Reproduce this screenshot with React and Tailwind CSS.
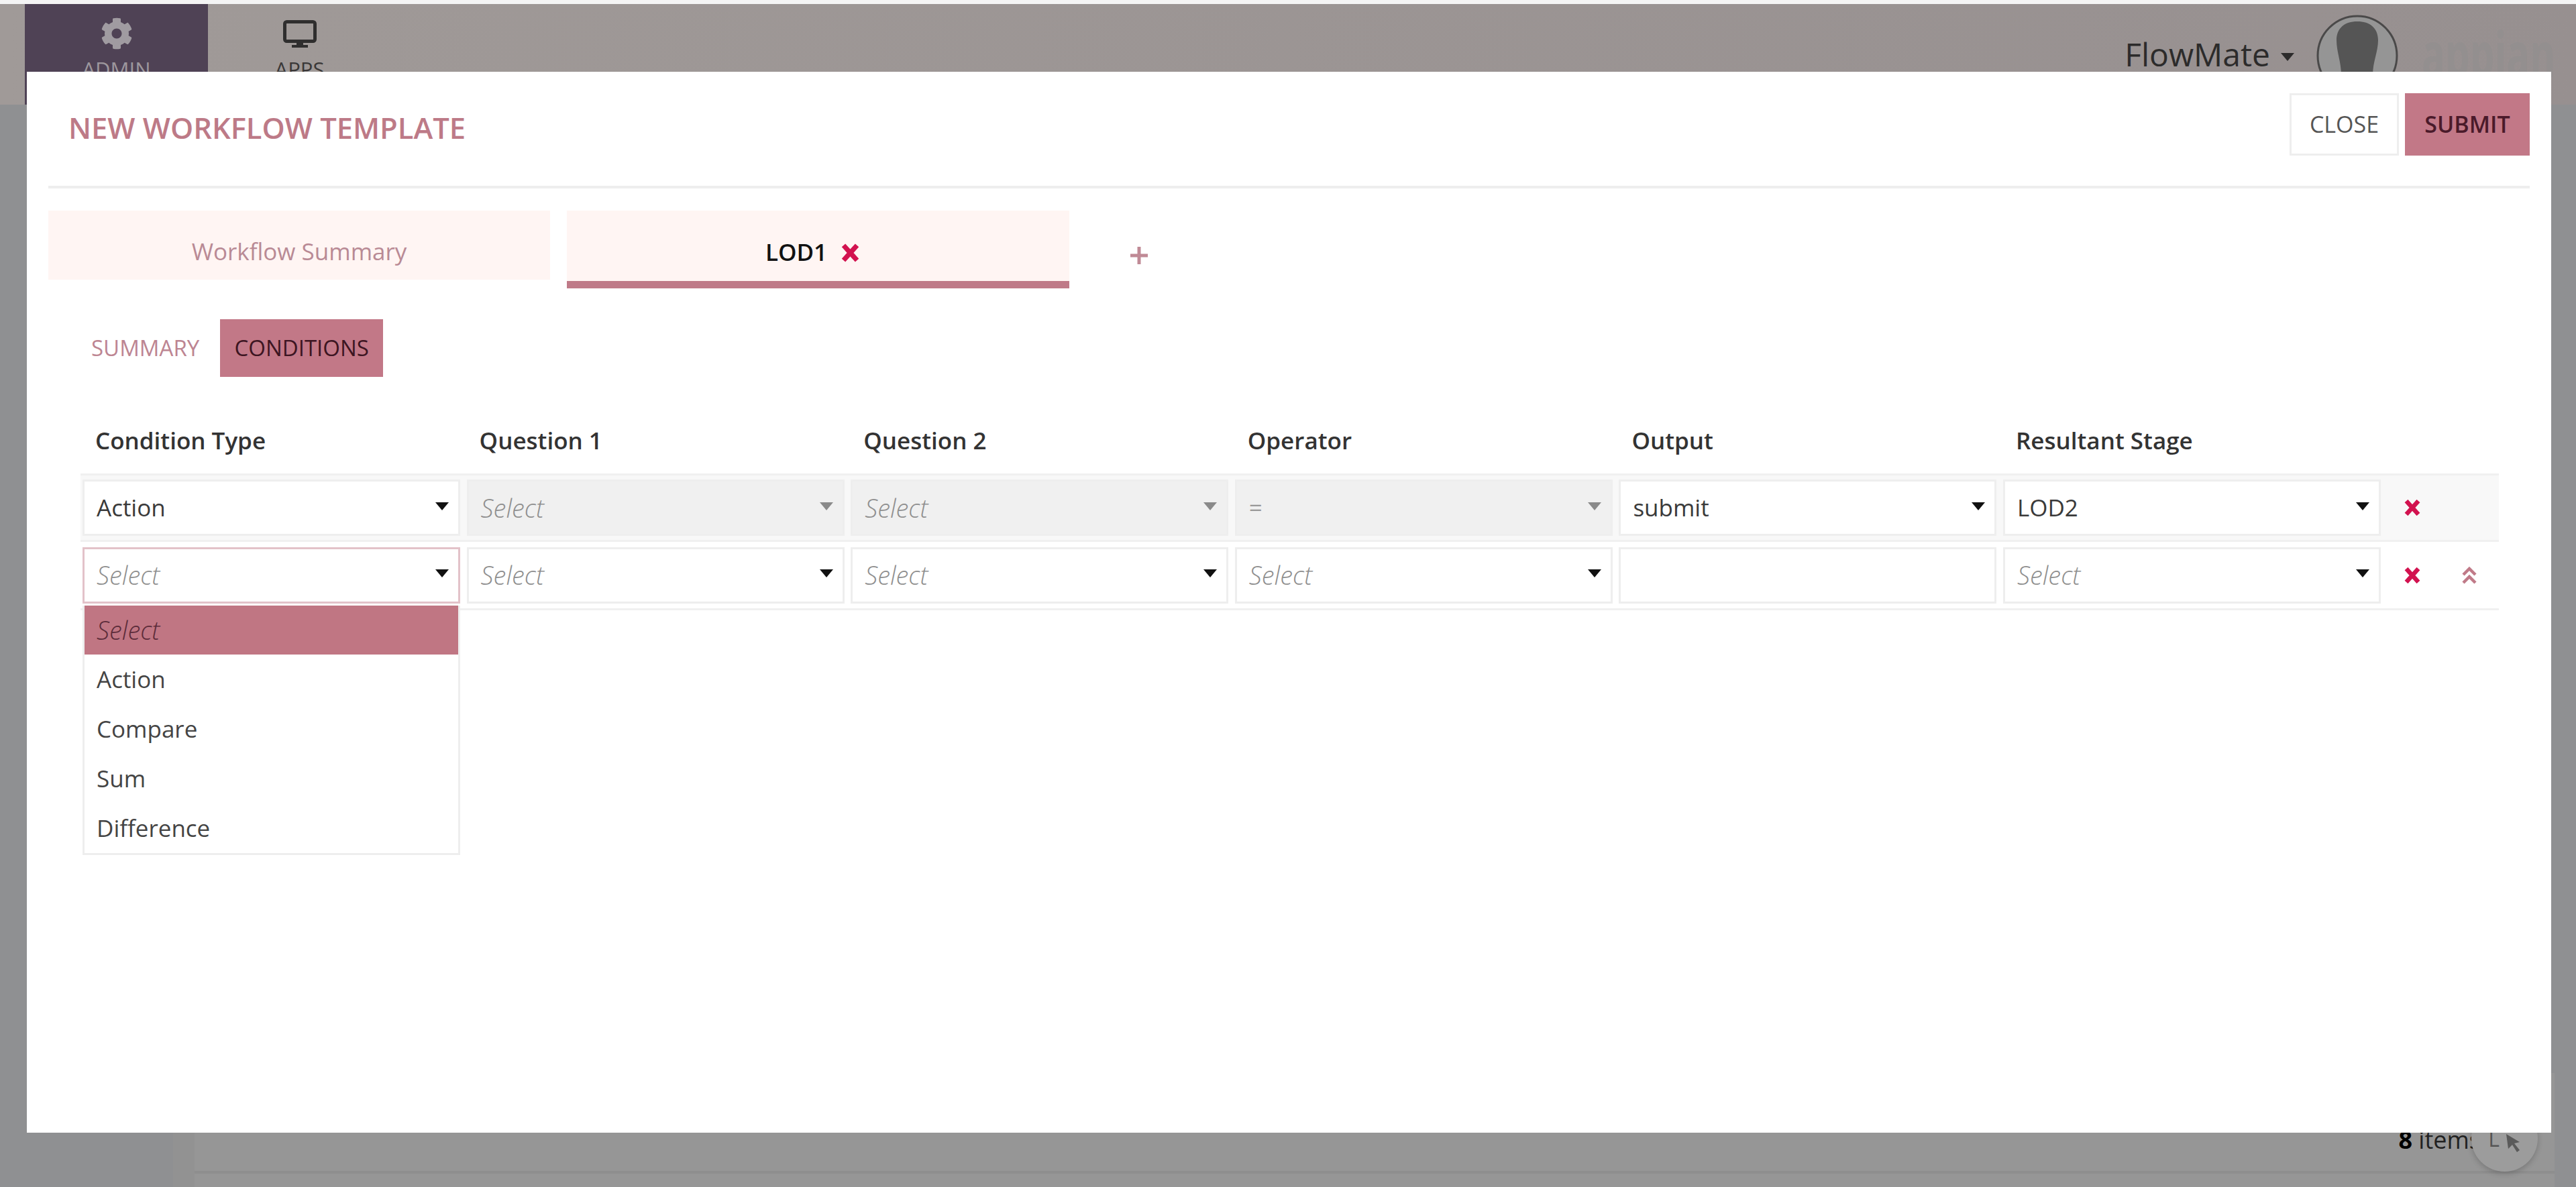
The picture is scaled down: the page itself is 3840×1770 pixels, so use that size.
import React from "react";
import { FaCog } from "react-icons/fa";

const font = "font-['Open_Sans',sans-serif]";

function Caret({ muted }) {
  return (
    <svg viewBox="0 0 20 13" className="w-[20px] h-[13px] shrink-0 mt-[-6px]">
      <path d="M0 1 H20 L10 13 Z" fill={muted ? "#8a8a8a" : "#111"} />
    </svg>
  );
}

function Cross({ className }) {
  return (
    <svg viewBox="0 0 26 24" className={className}>
      <path d="M4 2 L22 22 M22 2 L4 22" stroke="#d2124f" strokeWidth="6.5" fill="none" />
    </svg>
  );
}

function Field({ value, placeholder, disabled, focused, noCaret }) {
  const tone = focused
    ? "bg-white border-[#e3c2c9]"
    : disabled
    ? "bg-[#f0f0f0] border-[#eeeeee]"
    : "bg-white border-[#eeeeee]";
  return (
    <div className={`h-[84px] border-[3px] flex items-center justify-between pl-[18px] pr-[14px] ${tone}`}>
      {value ? (
        <span className={`text-[35px] ${disabled ? "text-[#999]" : "text-[#3a3a3a]"}`}>{value}</span>
      ) : (
        <span className="text-[38px] italic font-light text-[#8f8f8f]">{placeholder}</span>
      )}
      {!noCaret && <Caret muted={disabled} />}
    </div>
  );
}

const headers = ["Condition Type", "Question 1", "Question 2", "Operator", "Output", "Resultant Stage"];
const options = ["Action", "Compare", "Sum", "Difference"];

export default function App() {
  return (
    <div className={`relative w-[3840px] h-[1770px] overflow-hidden bg-[#8f9092] ${font}`}>
      <div className="h-[6px] bg-[#f4f4f4]" />
      <header className="h-[150px] flex items-start overflow-hidden pl-[37px] bg-gradient-to-r from-[#a09a98] to-[#979090]">
        <div className="w-[273px] h-full bg-[#4f4255] flex flex-col items-center pt-[20px] text-[#9d979d]">
          <FaCog className="w-[48px] h-[48px] text-[#a09ba1]" />
          <span className="text-[31px] leading-[36px] mt-[11px]">ADMIN</span>
        </div>
        <div className="w-[273px] h-full flex flex-col items-center pt-[24px] text-[#3a3838]">
          <svg viewBox="0 0 50 42" className="w-[50px] h-[42px]">
            <rect x="2.5" y="2.5" width="45" height="29" rx="3" fill="none" stroke="#2f2e2e" strokeWidth="5" />
            <path d="M20 33 H30 V37 H37 V41 H13 V37 H20 Z" fill="#2f2e2e" />
          </svg>
          <span className="text-[31px] leading-[36px] mt-[13px]">APPS</span>
        </div>
        <div className="ml-auto flex items-start">
          <div className="flex items-center mt-[47px] h-[56px]">
            <span className="text-[48px] text-[#2c2b2b] leading-none">FlowMate</span>
            <svg viewBox="0 0 20 12" className="w-[20px] h-[12px] ml-[16px] mt-[8px]">
              <path d="M0 0 H20 L10 12 Z" fill="#2c2b2b" />
            </svg>
          </div>
          <svg viewBox="0 0 122 122" className="w-[122px] h-[122px] ml-[33px] mt-[16px]">
            <circle cx="61" cy="61" r="59" fill="#959595" stroke="#4a4949" strokeWidth="3" />
            <path
              d="M61 10 C80 10 92 20 92 38 C92 55 84 70 84 90 L37 90 C37 70 30 55 30 38 C30 20 42 10 61 10 Z"
              fill="#555555"
            />
          </svg>
          <span className="ml-[35px] mr-[33px] mt-[18px] w-[197px] whitespace-nowrap text-[58px] leading-[70px] font-bold text-[#938f8f] origin-top scale-y-[1.6]">appian</span>
        </div>
      </header>

      <div className="absolute left-[258px] top-[1600px] w-[3550px] h-[170px] bg-[#969696] border-l-[32px] border-[#929292]">
        <div className="absolute left-0 right-0 top-[146px] h-[4px] bg-[#8e8e8e]" />
        <div className="absolute right-[110px] top-[75px] text-[36px] leading-[50px] text-[#222] whitespace-nowrap">
          <span className="font-bold text-black">8</span> items
        </div>
        <div className="absolute right-[25px] top-[48px] w-[99px] h-[99px] rounded-full bg-[#9c9c9c] shadow-[0_3px_8px_rgba(0,0,0,0.2)] flex items-center justify-center gap-[8px] text-[#555]">
          <span className="text-[32px] leading-none">L</span>
          <svg viewBox="0 0 24 28" className="w-[24px] h-[28px] mt-[14px]">
            <path d="M2 0 L22 12 L14 14 L22 24 L18 27 L11 16 L5 22 Z" fill="#5a5a5a" />
          </svg>
        </div>
      </div>

      <div className="absolute left-[40px] top-[107px] w-[3763px] h-[1582px] bg-white flex flex-col pt-[32px]">
        <div className="mx-[32px] h-[142px] border-b-[4px] border-[#eeeeee] flex items-start justify-between">
          <h1 className="pl-[30px] mt-[24px] text-[43.5px] leading-[56px] font-semibold text-[#bd7a87]">NEW WORKFLOW TEMPLATE</h1>
          <div className="flex gap-[9px]">
            <button className="w-[163px] h-[93px] bg-white border-[3px] border-[#eeeeee] text-[34px] text-[#555]">CLOSE</button>
            <button className="w-[186px] h-[93px] bg-[#c27887] text-[34px] font-semibold text-[#4a1a2a]">SUBMIT</button>
          </div>
        </div>

        <div className="mx-[32px] mt-[33px] flex items-start gap-[25px]">
          <div className="w-[748px] h-[103px] pt-[20px] bg-[#fff5f3] flex items-center justify-center text-[35px] text-[#b98a95]">Workflow Summary</div>
          <div className="w-[749px] h-[116px] pt-[20px] pr-[16px] bg-[#fff5f3] border-b-[11px] border-[#bf7a88] flex items-center justify-center gap-[20px] text-[35px] font-semibold text-[#111]">
            <span>LOD1</span>
            <Cross className="w-[29px] h-[28px]" />
          </div>
          <svg viewBox="0 0 30 30" className="w-[30px] h-[30px] ml-[64px] mt-[52px]">
            <path d="M15 2 V28 M2 15 H28" stroke="#c08a96" strokeWidth="5" />
          </svg>
        </div>

        <div className="ml-[96px] mt-[46px] flex items-center gap-[31px] text-[33px]">
          <span className="text-[#bd8592]">SUMMARY</span>
          <span className="w-[243px] h-[86px] bg-[#c27887] flex items-center justify-center text-[#3d1522] font-medium">CONDITIONS</span>
        </div>

        <div className="relative ml-[80px] mr-[78px] mt-[56px]">
          <div className="grid grid-cols-[repeat(6,563px)] gap-x-[9.6px] pl-[5px] pt-[14px] h-[88px] items-start">
            {headers.map((h) => (
              <div key={h} className="pl-[17px] text-[35px] leading-[50px] font-semibold text-[#333]">{h}</div>
            ))}
          </div>
          <div className="h-[102px] bg-[#f8f8f8] border-y-[3px] border-[#f0f0f0] flex items-center pl-[3px]">
            <div className="grid grid-cols-[repeat(6,563px)] gap-x-[9.6px]">
              <Field value="Action" />
              <Field placeholder="Select" disabled />
              <Field placeholder="Select" disabled />
              <Field value="=" disabled />
              <Field value="submit" />
              <Field value="LOD2" />
            </div>
            <Cross className="w-[26px] h-[24px] ml-[34px]" />
          </div>
          <div className="h-[102px] border-b-[3px] border-[#f0f0f0] flex items-center pl-[3px]">
            <div className="grid grid-cols-[repeat(6,563px)] gap-x-[9.6px]">
              <Field placeholder="Select" focused />
              <Field placeholder="Select" />
              <Field placeholder="Select" />
              <Field placeholder="Select" />
              <Field noCaret />
              <Field placeholder="Select" />
            </div>
            <Cross className="w-[26px] h-[24px] ml-[34px]" />
            <svg viewBox="0 0 24 26" className="w-[24px] h-[26px] ml-[60px]">
              <path d="M3 12 L12 3 L21 12 M3 24 L12 15 L21 24" stroke="#c07a88" strokeWidth="4.5" fill="none" />
            </svg>
          </div>

          <ul className="absolute left-[3px] top-[285px] w-[563px] bg-white border-[3px] border-t-0 border-[#eeeeee]">
            <li className="h-[73px] bg-[#c07683] flex items-center pl-[18px] text-[38px] italic font-light text-[#5c2c3a]">Select</li>
            {options.map((o) => (
              <li key={o} className="h-[74px] flex items-center pl-[18px] text-[35px] text-[#444]">{o}</li>
            ))}
          </ul>
        </div>
      </div>
    </div>
  );
}
